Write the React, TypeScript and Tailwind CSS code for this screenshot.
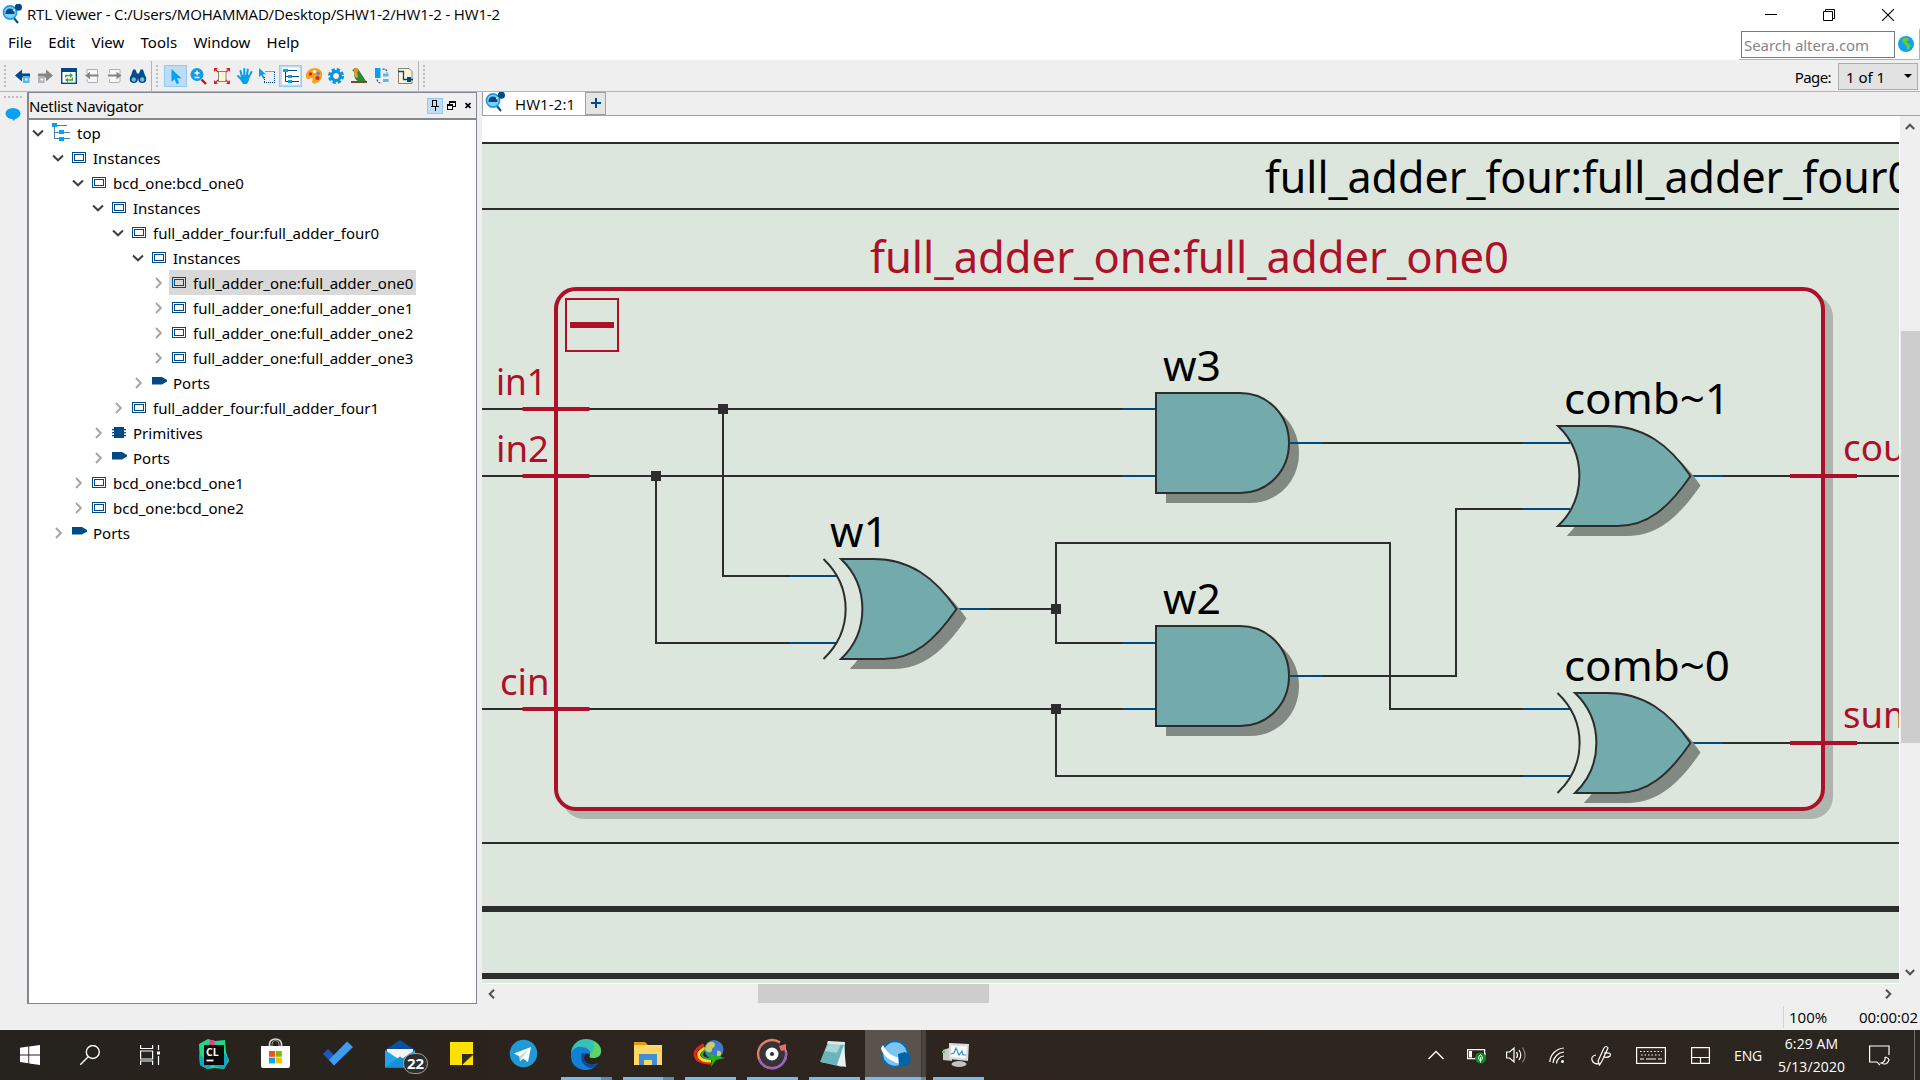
import React from "react";

const NAVY = "#004a86";
const SKY = "#00a3f0";
const INK = "#2d2d2d";
const RED = "#ad1029";

type NodeKind = "root" | "inst" | "port" | "prim";
type Row = { level: number; open: boolean; kind: NodeKind; label: string; selected?: boolean };

const rows: Row[] = [
  { level: 0, open: true, kind: "root", label: "top" },
  { level: 1, open: true, kind: "inst", label: "Instances" },
  { level: 2, open: true, kind: "inst", label: "bcd_one:bcd_one0" },
  { level: 3, open: true, kind: "inst", label: "Instances" },
  { level: 4, open: true, kind: "inst", label: "full_adder_four:full_adder_four0" },
  { level: 5, open: true, kind: "inst", label: "Instances" },
  { level: 6, open: false, kind: "inst", label: "full_adder_one:full_adder_one0", selected: true },
  { level: 6, open: false, kind: "inst", label: "full_adder_one:full_adder_one1" },
  { level: 6, open: false, kind: "inst", label: "full_adder_one:full_adder_one2" },
  { level: 6, open: false, kind: "inst", label: "full_adder_one:full_adder_one3" },
  { level: 5, open: false, kind: "port", label: "Ports" },
  { level: 4, open: false, kind: "inst", label: "full_adder_four:full_adder_four1" },
  { level: 3, open: false, kind: "prim", label: "Primitives" },
  { level: 3, open: false, kind: "port", label: "Ports" },
  { level: 2, open: false, kind: "inst", label: "bcd_one:bcd_one1" },
  { level: 2, open: false, kind: "inst", label: "bcd_one:bcd_one2" },
  { level: 1, open: false, kind: "port", label: "Ports" },
];

function AppLogo() {
  return (
    <svg width="20" height="20" viewBox="0 0 20 20" className="block shrink-0">
      <path d="M11.5 13.5 16 19" stroke="#00508f" strokeWidth="2" />
      <circle cx="8" cy="8.5" r="6.6" fill="#7fd0f7" stroke="#1d9be0" strokeWidth="1.6" />
      <path d="M3.5 9.5a4.5 4.5 0 0 1 9-1V10H3.5z" fill={NAVY} />
      <path d="M11 7 15 4" stroke="#fff" strokeWidth="1" />
      <circle cx="16.4" cy="3.2" r="3.6" fill={NAVY} />
    </svg>
  );
}

function NodeIcon({ kind }: { kind: NodeKind }) {
  if (kind === "root")
    return (
      <svg width="19" height="18" className="-mt-[2px] block shrink-0" shapeRendering="crispEdges">
        <path d="M2.5 3v12M2 9.5h16M2 15.5h16M5 2.5h10" stroke="#4d7fae" fill="none" />
        <path d="M0 0h5v4H0zM7 7h5v4H7zM7 14h5v4H7z" fill={SKY} />
      </svg>
    );
  if (kind === "inst")
    return (
      <svg width="14" height="11" className="block shrink-0" shapeRendering="crispEdges">
        <path d="M.5.5h13v10H.5zM2.5 2.5h9v6h-9z" fill="none" stroke={NAVY} />
      </svg>
    );
  if (kind === "prim")
    return (
      <svg width="14" height="11" className="block shrink-0">
        <path d="M2 0h10v11H2zM0 2h14v1.2H0zM0 5h14v1.2H0zM0 8h14v1.2H0z" fill={NAVY} />
      </svg>
    );
  return (
    <svg width="15" height="8" className="mb-[3px] block shrink-0">
      <path d="M0 0h10l5 3v1.6L10 7.4H0z" fill={NAVY} />
    </svg>
  );
}

function TreeRow({ row }: { row: Row }) {
  return (
    <div className="flex h-[25px] items-center" style={{ paddingLeft: 3 + row.level * 20 }}>
      <svg width="12" height="12" viewBox="0 0 12 12" className="block shrink-0">
        {row.open ? (
          <path d="M1 3.5 6 8.3 11 3.5" fill="none" stroke="#404040" strokeWidth="2" />
        ) : (
          <path d="M4 1 8.800 6 4 11" fill="none" stroke="#a6a6a6" strokeWidth="2" />
        )}
      </svg>
      <div
        className={
          "ml-[5px] flex h-[25px] items-center pl-[3px] pr-[3px] " + (row.selected ? "bg-[#d9d9d9]" : "")
        }
      >
        <NodeIcon kind={row.kind} />
        <span
          className={
            "whitespace-nowrap pt-px text-[15px] leading-[24px] text-black " +
            (row.kind === "root" ? "ml-[6px]" : row.kind === "port" ? "ml-[6px]" : "ml-[7px]")
          }
        >
          {row.label}
        </span>
      </div>
    </div>
  );
}

function Tool({ active, children }: { active?: boolean; children: React.ReactNode }) {
  return (
    <div
      className={
        "flex h-[22px] w-[23px] items-center justify-center " +
        (active ? "border border-[#90c8f6] bg-[#bfdcf4]" : "")
      }
    >
      <svg width="16" height="16" viewBox="0 0 16 16" className="block shrink-0 overflow-visible">
        {children}
      </svg>
    </div>
  );
}

function Grip() {
  return (
    <svg width="3" height="22" className="block">
      {[0, 4, 8, 12, 16, 20].map((y) => (
        <rect key={y} x="0" y={y} width="2" height="2" fill="#bdbdbd" />
      ))}
    </svg>
  );
}

function Toolbar() {
  return (
    <div className="flex h-[31px] items-stretch border-b border-[#b4b4b4] bg-[#efefef]">
      <div className="flex w-[152px] items-center border-r border-[#b4b4b4] pl-1">
        <Grip />
        <div className="ml-[4px] flex">
          <Tool>
            <path d="M0 7.500 7 1.500v4h8v4H7v4z" fill={NAVY} />
            <rect x="8" y="8" width="6.500" height="7" fill="#5ab8ee" />
            <rect x="10" y="10.500" width="2.500" height="2" fill="#fff" />
          </Tool>
          <Tool>
            <path d="M15 7.500 8 1.500v4H0v4h8v4z" fill="#868686" />
            <rect x="0" y="8" width="6.500" height="7" fill="#b4b4b4" />
            <rect x="2.500" y="10.500" width="2.500" height="2" fill="#fff" />
          </Tool>
          <Tool>
            <rect x=".7" y=".7" width="14.6" height="14.6" fill="#fff" stroke={NAVY} strokeWidth="1.4" />
            <rect x="0" y="0" width="16" height="4" fill={NAVY} />
            <path d="M4.700 9.500V7.500h5M11.300 9.500v2.500H6" fill="none" stroke="#43a33c" strokeWidth="1.4" />
            <path d="m9 5 3 2.500L9 10zM7 9.500l-3 2.500L7 14.500z" fill="#43a33c" />
          </Tool>
          <Tool>
            <path d="M3 5V1.500h10.500v13H4L3 13v-2" fill="#f7f7f7" stroke="#b0b0b0" />
            <path d="M1 7.500 6 3.800V6.500h8.500v2H6v2.700z" fill="#858585" />
          </Tool>
          <Tool>
            <path d="M2.500 5V1.500H13V13l-1 1.500H2.500V11" fill="#f7f7f7" stroke="#b0b0b0" />
            <path d="m14.500 7.500-5-3.700v2.700H1v2h8.500v2.700z" fill="#858585" />
          </Tool>
          <Tool>
            <path d="M3 1.500h2.500l1.500 4h2l1.500-4H13l3 9H0z" fill="#00508f" />
            <circle cx="3.800" cy="11" r="4" fill={NAVY} />
            <circle cx="12.200" cy="11" r="4" fill={NAVY} />
            <circle cx="3.800" cy="11.500" r="2.200" fill="#7cb9de" />
            <circle cx="12.200" cy="11.500" r="2.200" fill="#7cb9de" />
          </Tool>
        </div>
      </div>
      <div className="flex w-[267px] items-center border-r border-[#b4b4b4] pl-1">
        <Grip />
        <div className="ml-[5px] flex">
          <Tool active>
            <path d="M3.500 1v13l3-3 2 5 2.500-1-2-4.700h4.500z" fill={SKY} />
          </Tool>
          <Tool>
            <g transform="translate(-1 0)">
              <circle cx="7" cy="6.500" r="6.500" fill="#109be6" />
              <path d="M7 2.500v5M4.500 5h5M4.500 9.500h5" stroke="#fff" strokeWidth="1.300" />
              <path d="m11.500 11.500 4.500 4.500" stroke="#c4161c" strokeWidth="2.400" />
            </g>
          </Tool>
          <Tool>
            <path d="M4.500 3.500H11.500l-1 1v9h-6z" fill="#fff3d8" stroke="#8d8271" />
            <path d="M4.500 3.500h7.500v10H4.500z" fill="#fff3d8" stroke="#8d8271" />
            <path d="M0 0h4L0 4zM16 0h-4l4 4zM0 16h4l-4-4zM16 16h-4l4-4z" fill="#e31b23" />
            <path d="m1 1 3 3M15 1l-3 3M1 15l3-3M15 15l-3-3" stroke="#e31b23" strokeWidth="1.200" />
          </Tool>
          <Tool>
            <path
              d="M5 9 3.500 3M7.300 8V1M9.800 8l1-6.500M11.500 9.500l3-5.500M4.500 11.500 1 8"
              stroke="#0a9fe8"
              strokeWidth="2"
              strokeLinecap="round"
            />
            <path d="M4 7h8.500l-.5 5-2 4H6l-2.500-4z" fill="#0a9fe8" />
          </Tool>
          <Tool>
            <path d="M5.500 3.500H15M14.500 4v10M4 14.500h11M4.500 9v5" fill="none" stroke={NAVY} strokeDasharray="1 1" />
            <path d="M-1 0v9l2.200-2 2 4 1.600-.8-2-4H6z" fill={SKY} />
          </Tool>
          <Tool active>
            <rect x="-1" y="-.5" width="18" height="17" fill="#fff" />
            <path d="M2.500 4v9.500H16M2.500 8.500H16M5 2.500h9" fill="none" stroke={NAVY} />
            <path d="M0 1h5v3H0zM5 7h4v3H5zM5 12h4v3H5z" fill={SKY} />
          </Tool>
          <Tool>
            <path d="M0 9C-1 3 5 0 9 0c5 0 8 4 7 8-.8 5-5 7.500-8 7.500-2 0-2-2-1.500-3.500.5-2-1-2.500-2.500-1.500S1 11.500 0 9z" fill="#f9a11b" />
            <circle cx="4.500" cy="6" r="1.700" fill="#e02020" />
            <circle cx="8.500" cy="3.500" r="1.600" fill="#fff" />
            <circle cx="12.300" cy="5.500" r="1.700" fill="#2e9ee6" />
            <circle cx="11.500" cy="10" r="2" fill="#d6271c" />
          </Tool>
          <Tool>
            <g transform="translate(-1 0)">
              <circle cx="8" cy="8" r="6.500" fill="none" stroke="#0a93df" strokeWidth="3" strokeDasharray="3.100 2" />
              <circle cx="8" cy="8" r="4.400" fill="#fff3cf" stroke="#0a93df" strokeWidth="3" />
            </g>
          </Tool>
          <Tool>
            <g transform="translate(-1 0)">
              <path d="M1 2.500 4 0c3 0 4 2 5 4l6 9H7C3 11 3 7 3.500 4z" fill="#218c3a" />
              <path d="M3.500 4 6 4l1 5-2 1C3.500 8 3 6 3.500 4z" fill="#f39a1e" />
              <circle cx="5" cy="2.300" r="2.200" fill="#ef8a1d" />
              <path d="M0 13h16v2H0z" fill="#7a4a24" />
            </g>
          </Tool>
          <Tool>
            <path d="M0 0h5.500v10H0z" fill={SKY} />
            <path d="M8 5.500h5.500v3H8zM8 11h5.500v3H8z" fill="#58b9ee" />
            <path d="M7.500 1c3 0 4.500 1 4.500 3.500M2 11.500c.5 2.500 2 3.500 4.500 3.500" fill="none" stroke={NAVY} strokeWidth="1.200" strokeDasharray="2 1" />
          </Tool>
          <Tool>
            <g transform="translate(-1 0)">
              <path d="M1.500.5H12L15 3.500v12H1.500z" fill="#fff5dc" stroke="#8a8172" />
              <path d="M1 3.500h5.500v8H16" fill="none" stroke={NAVY} strokeWidth="1.300" />
              <rect x="10" y="9" width="4" height="5" fill={NAVY} />
            </g>
          </Tool>
        </div>
      </div>
      <div className="flex items-center pl-1">
        <Grip />
      </div>
      <div className="ml-auto flex items-center pr-[2px] text-[15px] text-black">
        <span className="pt-[2px] tracking-[-0.6px]">Page:</span>
        <div className="ml-[7px] mt-px flex h-[27px] w-[80px] items-center justify-between border border-[#adadad] bg-[#e2e2e2] pl-[7px] pr-[5px]">
          <span className="pt-px">1 of 1</span>
          <svg width="8" height="4" className="mb-[2px]">
            <path d="M0 0h8L4 4z" fill="#000" />
          </svg>
        </div>
      </div>
    </div>
  );
}

/* ---------- schematic ---------- */

function Label({ x, y, w, size, color, children }: { x: number; y: number; w: number; size: number; color: string; children: string }) {
  return (
    <text x={x} y={y} fontSize={size} fill={color} textLength={w} lengthAdjust="spacingAndGlyphs">
      {children}
    </text>
  );
}

function AndGate({ x, y }: { x: number; y: number }) {
  const d = "M0 0H84C112 0 133 22 133 50C133 78 112 100 84 100H0Z";
  return (
    <g transform={`translate(${x} ${y})`}>
      <path d={d} transform="translate(10 10)" fill="#828982" />
      <path d={d} fill="#73abad" stroke={INK} strokeWidth="2" />
    </g>
  );
}

function OrGate({ x, y, xor }: { x: number; y: number; xor?: boolean }) {
  const d = xor
    ? "M17.500 0H50C86 0 111 18 133 50C111 82 90 100 60 100H17.500C46 73 46 27 17.500 0Z"
    : "M.5 0H50C86 0 111 18 133 50C111 82 90 100 60 100H.5C29 73 29 27 .5 0Z";
  return (
    <g transform={`translate(${x} ${y})`}>
      <path d={d} transform="translate(9.500 9.500)" fill="#828982" stroke="#828982" strokeLinejoin="round" />
      <path d={d} fill="#73abad" stroke={INK} strokeWidth="2" />
      {xor && <path d="M0 0C29.500 28 29.500 72 0 100" fill="none" stroke={INK} strokeWidth="2" />}
    </g>
  );
}

function Schematic() {
  return (
    <svg width="1417" height="867" viewBox="482 116 1417 867" className="block shrink-0" fontFamily='"Noto Sans", sans-serif'>
      <rect x="482" y="116" width="1417" height="867" fill="#fff" />
      <rect x="482" y="143" width="1417" height="840" fill="#dde6dd" />
      <path d="M482 143H1899M482 209H1899M482 843H1899" stroke={INK} strokeWidth="2" />
      <path d="M482 909H1899M482 976H1899" stroke={INK} strokeWidth="6" />

      <rect x="562" y="295" width="1271" height="524" rx="22" fill="#aeb5ae" />
      <rect x="556" y="289" width="1267" height="520" rx="20" fill="#dde6dd" stroke={RED} strokeWidth="4" />
      <rect x="566" y="299" width="52" height="52" fill="none" stroke={RED} strokeWidth="2" />
      <rect x="570" y="322" width="44" height="6" fill={RED} />

      <g fill="none" stroke={INK} strokeWidth="2">
        <path d="M482 409H1124M482 476H1124M482 709H1124" />
        <path d="M723 409V576H790M656 476V643H790" />
        <path d="M990 609H1056M1124 643H1056V543H1390V709H1523" />
        <path d="M1056 709V776H1523" />
        <path d="M1323 443H1523M1323 676H1456V509H1523" />
        <path d="M1723 476H1899M1723 743H1899" />
      </g>
      <g fill="none" stroke="#004a7c" strokeWidth="2">
        <path d="M1123 409H1156M1123 476H1156M1123 643H1156M1123 709H1156" />
        <path d="M790 576H836M790 643H836M957 609H990" />
        <path d="M1523 443H1570M1523 509H1570M1523 709H1570M1523 776H1570" />
        <path d="M1691 476H1723M1691 743H1723" />
      </g>
      <path d="M718 404h10v10h-10zM651 471h10v10h-10zM1051 604h10v10h-10zM1051 704h10v10h-10z" fill={INK} />

      <AndGate x={1156} y={393} />
      <AndGate x={1156} y={626} />
      <OrGate x={823.5} y={559} xor />
      <OrGate x={1557.5} y={426} />
      <OrGate x={1557.5} y={693} xor />
      <path d="M1289 443H1323M1289 676H1323" stroke="#004a7c" strokeWidth="2" />

      <path
        d="M522.500 409H589.500M522.500 476H589.500M522.500 709H589.500M1790 476H1857M1790 743H1857"
        stroke={RED}
        strokeWidth="4"
      />

      <Label x={1265} y={193} w={647} size={43} color="#000">full_adder_four:full_adder_four0</Label>
      <Label x={870} y={273} w={639} size={43} color={RED}>full_adder_one:full_adder_one0</Label>
      <Label x={496} y={395} w={51} size={36} color={RED}>in1</Label>
      <Label x={496} y={462} w={53} size={36} color={RED}>in2</Label>
      <Label x={500} y={695} w={49.5} size={36} color={RED}>cin</Label>
      <Label x={1843} y={461} w={76} size={36} color={RED}>cout</Label>
      <Label x={1843} y={728} w={74} size={36} color={RED}>sum</Label>
      <Label x={1163} y={381} w={58} size={42} color="#000">w3</Label>
      <Label x={830} y={547} w={58} size={42} color="#000">w1</Label>
      <Label x={1163} y={614} w={58} size={42} color="#000">w2</Label>
      <Label x={1564} y={414} w={166} size={42} color="#000">comb~1</Label>
      <Label x={1564} y={681} w={166} size={42} color="#000">comb~0</Label>
    </svg>
  );
}

/* ---------- taskbar ---------- */

function Task({ state, stacked, children }: { state?: "running" | "active"; stacked?: boolean; children: React.ReactNode }) {
  return (
    <div className="relative flex h-[50px] w-[62px] items-center justify-center">
      {state === "active" && (
        <div className="absolute inset-y-0 left-0 flex w-[61px]">
          <div className="w-[56px] bg-[#5a524c]" />
          <div className="w-px bg-[#3b3430]" />
          <div className="w-[4px] bg-[#4a433e]" />
        </div>
      )}
      {state === "running" && (
        <div className="absolute bottom-0 left-[6px] flex h-[3px] w-[51px]">
          <div className="grow bg-[#76b9ed]" />
          {stacked && <div className="w-[11px] bg-[#5a8bb8]" />}
        </div>
      )}
      {state === "active" && (
        <div className="absolute bottom-0 left-0 flex h-[3px] w-[61px]">
          <div className="w-[56px] bg-[#76b9ed]" />
          <div className="grow bg-[#5a8bb8]" />
        </div>
      )}
      <svg width="32" height="32" viewBox="0 0 32 32" className="relative block shrink-0 overflow-visible">
        {children}
      </svg>
    </div>
  );
}

function Taskbar() {
  return (
    <div className="flex h-[50px] items-center bg-linear-to-r from-[#26221d] via-[#2f251e] to-[#2b2521] font-['Open_Sans',sans-serif] text-white">
      <div className="flex h-[50px] w-[60px] items-center justify-center">
        <svg width="20" height="20" viewBox="0 0 20 20">
          <path d="M0 2.800 8.300 1.600V9.500H0zM9.200 1.500 20 0v9.500H9.200zM0 10.400h8.300v7.900L0 17.100zM9.200 10.400H20V20L9.200 18.400z" fill="#fff" />
        </svg>
      </div>
      <div className="flex h-[50px] w-[60px] items-center justify-center">
        <svg width="20" height="20" viewBox="0 0 20 20" fill="none" stroke="#fff" strokeWidth="1.400">
          <circle cx="12.800" cy="7" r="6.500" />
          <path d="M8.200 11.800.3 19.700" />
        </svg>
      </div>
      <div className="flex h-[50px] w-[63px] items-center justify-center pr-[3px]">
        <svg width="20" height="20" viewBox="0 0 20 20" fill="none" stroke="#fff" strokeWidth="1.200">
          <path d="M.6 0v3.500h12V0M.6 20v-4h12v4M.6 6h12v8H.6zM18.500 0v5M18.500 11v9" />
          <path d="M17 6.500h3v3h-3z" fill="#fff" stroke="none" />
        </svg>
      </div>

      <Task>
        <path d="m1 5 9-5 7 2 10-1 1 12 3 9-5 8-9-1-8 1-7-4z" fill="#21d789" />
        <path d="m12 1 4 0 1 5h-6z" fill="#e4408f" />
        <path d="m26 14 5 6-5 10-10-3zM1 15l1 11 8 4 4-4z" fill="#12a6c8" />
        <rect x="6" y="6" width="20" height="20" fill="#0a0a0a" />
        <text x="8" y="16.500" fontSize="10.500" fontWeight="700" fill="#fff">CL</text>
        <path d="M8.500 21.500h7" stroke="#fff" strokeWidth="1.800" />
      </Task>
      <Task>
        <path d="M9.500 8V5a6 5 0 0 1 12 0v3" fill="none" stroke="#ddd" strokeWidth="1.600" />
        <path d="M12 8V5a3.500 3.500 0 0 1 7 0v3" fill="none" stroke="#999" strokeWidth="1" />
        <path d="M1 7h29v20q0 2-2 2H3q-2 0-2-2z" fill="#fff" />
        <path d="M9 12h6v5.800H9z" fill="#f25022" />
        <path d="M15.800 12h6v5.800h-6z" fill="#7fba00" />
        <path d="M9 18.600h6v5.800H9z" fill="#00a4ef" />
        <path d="M15.800 18.600h6v5.800h-6z" fill="#ffb900" />
      </Task>
      <Task>
        <path d="m1 15 5-5 11 11-5 5.500z" fill="#1d56c0" />
        <path d="M12 26.500 7 21 25 2.500l6 5.500z" fill="#3f9af0" />
      </Task>
      <Task>
        <path d="M1 11 16 1l15 10v17H1z" fill="#0a4f9e" />
        <path d="M3 10h26v6l-13 8L3 17z" fill="#f5f5f5" />
        <path d="m1 11 15 10L31 11v17.500H1z" fill="#22a5e8" />
        <path d="m1 28.500 15-11 15 11z" fill="#1590d8" />
        <rect x="19.500" y="14.500" width="24" height="20" rx="10" fill="#2c2e30" stroke="#a3a3a3" strokeWidth="1" />
        <text x="23" y="30" fontSize="15" fontWeight="700" fill="#fff">22</text>
      </Task>
      <Task>
        <path d="M4 3h23v12L16 26H4z" fill="#ffe100" />
        <path d="M27 16v10H16z" fill="#ffe100" />
        <path d="M16 15h11L16 26z" fill="#322b18" />
      </Task>
      <Task>
        <circle cx="15.500" cy="14.500" r="13.700" fill="#2199d6" />
        <path d="M6 14.500 23 8l-3 15-5-3.500-3 3-.500-5z" fill="#fff" />
        <path d="m11.500 17.500 9-7-6.500 8-2 4z" fill="#b6d5ea" />
      </Task>
      <Task state="running" stacked>
        <path d="M1 15C1 6 8 0 16 0c9 0 15 6 15 12 0 5-4 7-8 7-3 0-4-1-3-3 1-6-7-9-13-6-3 1-5 3-6 5z" fill="#35c1b8" />
        <path d="M23 2c6 3 8 6 8 10 0 5-4 7-8 7-3 0-4-1-3-3 3-4 6-8 3-14z" fill="#5bd660" />
        <path d="M1 15c1-5 6-8 11-7 6 1 8 4 8 8-5-4-8 1-6 5 2 5 8 6 14 3-3 5-8 7-12 7C6 31 0 24 1 15z" fill="#1180d5" />
        <path d="M12 14c-3 8 3 15 10 15 3-1 5-3 6.500-5-6 3-12 1-14-3-1-3 0-5 2-6z" fill="#0d4a95" />
      </Task>
      <Task state="running" stacked>
        <path d="M2 3h11l3 3H2z" fill="#e09a0a" />
        <path d="M2 6h28v20H2z" fill="#ffd766" />
        <path d="M7 15h18v11h-5v-5h-8v5H7z" fill="#3f8fd8" />
      </Task>
      <Task state="running">
        <path d="M10 6C-5 12 0 25 17 24" fill="none" stroke="#e3261f" strokeWidth="3" />
        <path d="M11 9C1 14 3 22 17 22" fill="none" stroke="#ffdd1f" strokeWidth="3" />
        <path d="M11 11c-6 4-3 9 7 9" fill="none" stroke="#2daf3d" strokeWidth="2" />
        <circle cx="20" cy="10.500" r="9.500" fill="#3f78d0" />
        <path d="M13 5c4-4 8-2 8 1s-3 2-3 5-4 3-6 1 0-5 1-7zM23 12c3-1 5 1 4 4l-4 3z" fill="#c5cf6a" />
        <path d="m13 14 18 5-9 2-5 7 1-8z" fill="#1fb51f" />
      </Task>
      <Task state="running">
        <circle cx="16" cy="15" r="13" fill="#343438" />
        <path d="M24 3.500A14 14 0 1 0 29.500 11" fill="none" stroke="#e87f62" strokeWidth="2.300" />
        <path d="M3 20a14 14 0 0 0 27-7" fill="none" stroke="#9562c9" strokeWidth="2.300" />
        <path d="m23 7 7-2v6l-5 1z" fill="#e76d6a" />
        <circle cx="16" cy="15" r="6.500" fill="#fff" />
        <circle cx="16" cy="15" r="2" fill="#303035" />
      </Task>
      <Task state="running">
        <path d="m10 3 17 1-1 22-2 2-21-5z" fill="#83c4cc" />
        <path d="m10 3 16 1-7 22-17-3z" fill="#6bb2bd" />
        <path d="m11 4 12 1-4 9-12-2z" fill="#a8d5da" />
        <path d="m10 2 17 1-.5 3L9 4.500z" fill="#dfe9ea" />
        <path d="m26 6 2 22-9-2z" fill="#e9f1f2" />
      </Task>
      <Task state="active">
        <g transform="translate(-1 0)">
          <circle cx="16" cy="15" r="12.800" fill="#7cc4f1" stroke="#0b6cae" strokeWidth="2" />
          <path d="M4 6c5 10 12 13 22 13l-5 6C10 22 3 15 2 9z" fill="#fff" />
          <path d="m19 15 7-2 6 4-2 9-10 1z" fill="#0065a8" />
        </g>
      </Task>
      <Task state="running">
        <g transform="translate(-2 1)">
          <path d="m3 10 9-3v14l-9-1z" fill="#c9c9c9" />
          <path d="m9 3 20 1-1 17-19-2z" fill="#dcdcdc" />
          <path d="m11 5.500 16 1-1.500 12L11 17z" fill="#f7fbff" />
          <path d="m11 14 3-1 2-5 3 7 3-4 1 4h3" fill="none" stroke="#3a8fd0" strokeWidth="1.200" />
          <ellipse cx="19" cy="24" rx="7.500" ry="3" fill="#c4c4c4" />
          <path d="M2 11h3v2H2z" fill="#4ac25a" />
        </g>
      </Task>

      <div className="ml-auto flex h-[50px] items-center">
        <svg width="16" height="10" viewBox="0 0 16 10" className="mr-[23px]">
          <path d="m.5 9 7.500-7.500L15.500 9" fill="none" stroke="#fff" strokeWidth="1.300" />
        </svg>
        <svg width="20" height="17" viewBox="0 0 20 17" className="mr-[19px]">
          <path d="M.6 2.600h17v9H.6zM18 5.500v3" fill="none" stroke="#fff" strokeWidth="1.200" />
          <path d="M2 4h3v6.500H2z" fill="#fff" />
          <circle cx="13.500" cy="11" r="5.500" fill="#0a8a20" />
          <path d="M13.500 7.500q4 4 0 6.500-4-2.500 0-6.500M13.500 10v5.500" fill="none" stroke="#fff" strokeWidth="1" />
        </svg>
        <svg width="21" height="20" viewBox="0 0 21 20" className="mr-[22px]" fill="none" stroke="#fff" strokeWidth="1.200">
          <path d="M.6 7h3L8 3v14l-4.400-4h-3zM10.500 7q2 3 0 6M13 5q3.500 5 0 10" />
          <path d="M16.500 2.500q5 7.500 0 15" stroke="#84807b" />
        </svg>
        <svg width="16" height="17" viewBox="0 0 16 17" className="mr-[26px]" fill="none" stroke="#fff" strokeWidth="1.200">
          <path d="M.8 15A15 15 0 0 1 15 1M4 16A12 12 0 0 1 15 5M7.500 16.500A8 8 0 0 1 15 9" />
          <circle cx="13.500" cy="14.500" r="1.500" fill="#fff" stroke="none" />
        </svg>
        <svg width="21" height="21" viewBox="0 0 21 21" className="mr-[24px]" fill="none" stroke="#fff" strokeWidth="1.200">
          <path d="M8.500 20 7 16 13 3q2-3 4 0l-6 13zM5 10q-5 1-4 5t7 4M13 8q8-1 6 3-2 2-7 1" />
        </svg>
        <svg width="30" height="17" viewBox="0 0 30 17" className="mr-[25px]" fill="none" stroke="#fff" strokeWidth="1.200">
          <rect x=".6" y=".6" width="28.800" height="15.800" />
          <path d="M4 4.500h22M5 8h20" strokeDasharray="1.500 2" />
          <path d="M4 12h4M10 12h10M22 12h4" />
        </svg>
        <svg width="19" height="17" viewBox="0 0 19 17" className="mr-[24px]" fill="none" stroke="#fff" strokeWidth="1.200">
          <path d="M.6.6h17.800v15.800H.6zM.6 10.500h17.800M9.500 10.500v6" />
        </svg>
        <span className="mr-[16px] text-[14px] tracking-[-0.2px]">ENG</span>
        <div className="mr-[22px] flex w-[69px] flex-col items-center whitespace-nowrap text-[14px] leading-[23px]">
          <span className="-ml-[2px] tracking-[0.1px]">6:29 AM</span>
          <span className="-ml-[2px] tracking-[0.1px]">5/13/2020</span>
        </div>
        <svg width="21" height="21" viewBox="0 0 21 21" className="mr-[24px]" fill="none" stroke="#fff" strokeWidth="1.200">
          <path d="M20 10V1H.6v16H8l3 3M16 12q1 5-4 6 6 3 8-3 0-2-4-3" />
        </svg>
        <div className="mr-[5px] h-[50px] w-px bg-[#77726d]" />
      </div>
    </div>
  );
}

export default function App() {
  return (
    <div className="flex h-[1080px] w-[1920px] flex-col overflow-hidden bg-[#efefef] font-['Noto_Sans',sans-serif] text-black">
      {/* Title bar and menu */}
      <div className="flex h-[60px] justify-between bg-white">
        <div className="flex flex-col">
          <div className="flex h-[28px] items-center pl-[2px]">
            <AppLogo />
            <span className="ml-[5px] whitespace-nowrap font-['Open_Sans',sans-serif] text-[15px] tracking-[-0.16px]">
              RTL Viewer - C:/Users/MOHAMMAD/Desktop/SHW1-2/HW1-2 - HW1-2
            </span>
          </div>
          <div className="flex h-[28px] items-center gap-[16.3px] pl-[8px] text-[15px]">
            <span>File</span>
            <span>Edit</span>
            <span>View</span>
            <span>Tools</span>
            <span>Window</span>
            <span>Help</span>
          </div>
        </div>
        <div className="flex flex-col">
          <div className="flex h-[29px] items-center justify-end pr-[26px]">
            <svg width="12" height="12" className="mr-[46px]"><path d="M0 5.500h12" stroke="#000" /></svg>
            <svg width="12" height="12" className="mr-[47px]" fill="none" stroke="#000">
              <path d="M.5 2.500h9v9h-9zM2.500 2.500v-2h9v9h-2" />
            </svg>
            <svg width="12" height="12"><path d="m0 0 12 12M12 0 0 12" stroke="#000" strokeWidth="1.100" /></svg>
          </div>
          <div className="flex h-[31px] w-[181px] items-center border-b border-r border-[#b4b4b4] pl-[2px]">
            <div className="flex h-[27px] w-[154px] items-center border border-[#7a7a7a] pl-[2px] pt-[2px] text-[15px] text-[#868686]">
              <span className="tracking-[-0.07px]">Search altera.com</span>
            </div>
            <svg width="16" height="16" viewBox="0 0 16 16" className="ml-[3px]">
              <circle cx="8" cy="8" r="8" fill="#0fa2ee" />
              <path d="M4 3q3-2 6-1l1 2-3 1.500 2 2 3 2-2.500 4-1.500.5-.5-4L4.500 6z" fill="#6ccb2c" />
            </svg>
          </div>
        </div>
      </div>

      <div className="h-px bg-[#f0f0f0]" />
      <Toolbar />

      <div className="flex h-[912px]">
        {/* Dock strip */}
        <div className="flex w-[27px] flex-col items-start">
          <svg width="18" height="3" className="ml-[4px] mt-[4px]">
            {[0, 4, 8, 12, 16].map((x) => (
              <rect key={x} x={x} y="0" width="2" height="2" fill="#bdbdbd" />
            ))}
          </svg>
          <svg width="16" height="14" viewBox="0 0 16 14" className="ml-[5px] mt-[9px]">
            <ellipse cx="8" cy="5.500" rx="7.500" ry="5.500" fill="#0aa2ef" />
            <path d="m7 9 1 4 5-4z" fill="#0aa2ef" />
          </svg>
        </div>

        {/* Netlist navigator */}
        <div className="flex w-[450px] flex-col border border-l-2 border-[#828790] bg-white">
          <div className="flex h-[27px] items-center border-b-2 border-[#828790] bg-[#efefef] pr-[5px]">
            <span className="pt-px text-[15px] leading-[24px] tracking-[-0.3px]">Netlist Navigator</span>
            <div className="ml-auto flex h-[16px] w-[16px] items-center justify-center border border-[#90c8f6] bg-[#bfdcf4]">
              <svg width="8" height="11" shapeRendering="crispEdges">
                <path d="M1.500 6V.5h4V7M0 6.500h8M4 7v4" fill="none" stroke="#000" />
                <path d="M5 0h1v7H5z" />
              </svg>
            </div>
            <svg width="9" height="9" className="ml-[4px]" fill="none" stroke="#000" shapeRendering="crispEdges">
              <path d="M.5 4.500h5v4h-5zM2.500 4V1.500h6v4H6" />
              <path d="M0 4h6M2 1h7" strokeWidth="2" />
            </svg>
            <svg width="6" height="7" className="ml-[9px]">
              <path d="m.5 1 5 5M5.500 1l-5 5" stroke="#000" strokeWidth="1.700" />
            </svg>
          </div>
          <div className="flex flex-col">
            {rows.map((r, i) => (
              <TreeRow key={i} row={r} />
            ))}
          </div>
        </div>

        {/* Schematic view */}
        <div className="ml-[5px] flex w-[1438px] flex-col">
          <div className="flex h-[24px] border-b border-[#a0a0a0]">
            <div className="flex w-[103px] items-center border-l border-[#a0a0a0] bg-white pl-[2px]">
              <div className="-mt-[3px]">
                <AppLogo />
              </div>
              <span className="ml-[10px] mt-px whitespace-nowrap font-['Open_Sans',sans-serif] text-[15px] tracking-[0.1px]">HW1-2:1</span>
            </div>
            <div className="flex w-[21px] items-center justify-center border border-[#a0a0a0] bg-[#e4e4e4]">
              <svg width="10" height="10" className="mb-px"><path d="M5 0v10M0 5h10" stroke={NAVY} strokeWidth="2" /></svg>
            </div>
          </div>
          <div className="flex h-[868px]">
            <div className="flex w-[1418px] flex-col overflow-hidden bg-white">
              <Schematic />
            </div>
            <div className="flex w-[20px] flex-col items-center">
              <svg width="10" height="7" className="mt-[7px]">
                <path d="M.8 6 5 1.700 9.200 6" fill="none" stroke="#505050" strokeWidth="2" />
              </svg>
              <div className="mt-[201px] h-[412px] w-[19px] bg-[#cdcdcd]" />
              <svg width="10" height="7" className="mt-[226px]">
                <path d="M.8 1 5 5.300 9.200 1" fill="none" stroke="#505050" strokeWidth="2" />
              </svg>
            </div>
          </div>
          <div className="flex h-[19px] items-center">
            <svg width="7" height="10" className="ml-[6px]">
              <path d="M6 .8 1.700 5 6 9.200" fill="none" stroke="#505050" strokeWidth="2" />
            </svg>
            <div className="ml-[263px] h-[19px] w-[231px] bg-[#cdcdcd]" />
            <svg width="7" height="10" className="ml-[896px]">
              <path d="M1 .8 5.300 5 1 9.200" fill="none" stroke="#505050" strokeWidth="2" />
            </svg>
          </div>
        </div>
      </div>

      {/* Status bar */}
      <div className="flex h-[26px] items-center justify-end pr-[2px] text-[15px]">
        <div className="h-[22px] w-px bg-[#d4d4d4]" />
        <span className="ml-[5px] w-[70px] pt-px font-['Open_Sans',sans-serif]">100%</span>
        <span className="whitespace-nowrap pt-px font-['Open_Sans',sans-serif] tracking-[-0.05px]">00:00:02</span>
      </div>
      <Taskbar />
    </div>
  );
}
